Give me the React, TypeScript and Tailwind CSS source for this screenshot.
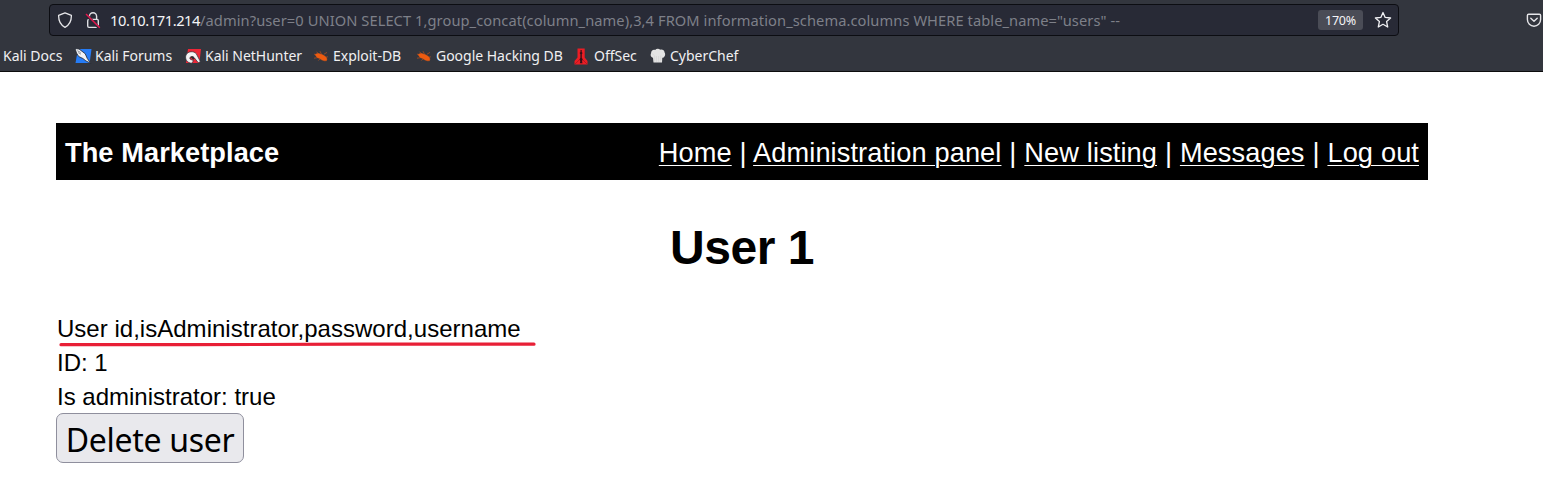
import React from "react";

const chromeFont = "font-['Noto_Sans',sans-serif]";

function Shield() {
  return (
    <svg width="16" height="16" viewBox="0 0 16 16" fill="none" stroke="#e6e6e9" strokeWidth="1.3" strokeLinejoin="round">
      <path d="M8 .8 14.4 3.4C14.5 8.8 12.6 13 8 15.3 3.4 13 1.5 8.8 1.6 3.4Z" />
    </svg>
  );
}

function InsecureLock() {
  return (
    <svg width="16" height="17" viewBox="0 0 16 17" fill="none">
      <path d="M4.4 7V4.3a3.6 3.6 0 0 1 7.2 0V7" stroke="#dedee2" strokeWidth="1.4" />
      <rect x="2.7" y="7.4" width="10.6" height="8" rx="1.3" stroke="#dedee2" strokeWidth="1.4" />
      <path d="M1 2.8 13.9 15.7" stroke="#282a36" strokeWidth="2.8" />
      <path d="M1 2 14.8 15.8" stroke="#e3174c" strokeWidth="1.5" />
    </svg>
  );
}

function Star() {
  return (
    <svg width="18" height="18" viewBox="0 0 18 18" fill="none" stroke="#f0f0f3" strokeWidth="1.3" strokeLinejoin="round">
      <path d="m9 1.5 2.2 4.9 5.4.6-4 3.6 1.1 5.4L9 13.3 4.3 16l1.1-5.4-4-3.6 5.4-.6Z" />
    </svg>
  );
}

function Pocket() {
  return (
    <svg width="16" height="16" viewBox="0 0 16 16" fill="none" stroke="#e6e6e9" strokeWidth="1.4" strokeLinecap="round" strokeLinejoin="round">
      <path d="M2.6 2.2h10.8c.7 0 1.2.5 1.2 1.2v4.2a6.6 6.6 0 0 1-13.2 0V3.4c0-.7.5-1.2 1.2-1.2Z" />
      <path d="M4.8 6.3 8 9.3l3.2-3" />
    </svg>
  );
}

function ForumsIcon() {
  return (
    <svg width="17" height="16" viewBox="0 0 17 16">
      <path d="M3 1h13.5l-1.8 14H.5Z" fill="#267cf5" />
      <path d="M0 .5 4 1l6.2 4.7 2.1 4.8 3.4 4.8-4.8-2.4-3-2.4-4.2-2L1.5 5Z" fill="#f2f3f5" stroke="#20242e" strokeWidth=".8" />
      <path d="m2.3 2.7 3.4 1.8M3.2 4.6l2.8 1.6" stroke="#4b505a" strokeWidth=".6" />
    </svg>
  );
}

function NetHunterIcon() {
  return (
    <svg width="17" height="16" viewBox="0 0 17 16">
      <path d="M3 1h13l-1.6 14H1Z" fill="#ee2637" />
      <path d="M1 7C3 3 8.6 2.8 11.2 5.6l4.2 8-2.1 1.1-4-4.9C7.2 7.3 4.2 8.7 5 11l3.6 1.7-2 2.6C2 14.8-.4 11 1 7Z" fill="#f5f3f4" stroke="#292b34" strokeWidth=".7" />
      <path d="m5.5 9 2.6-.4 1.5 2-1.3 1.2Z" fill="#292b34" />
    </svg>
  );
}

function BugIcon() {
  return (
    <svg width="16" height="16" viewBox="0 0 16 16" fill="none" stroke="#ee5b10">
      <path d="m1 6 3.2 1.5M3.5 3.7l2.5 2.6M7 3.2l2 4M1 10.2l4-.6m.3 3 2-2m3.5.8.7 1.7M11 6.2l3-1.8M12 9.4l2.9-.6" strokeWidth=".5" />
      <path d="M2.2 6.4c1.8-1.3 4-1.2 6.3.1 2.2.3 4.6 2 5.5 4.6l-.6 1.7c-2.4.1-5-.7-6.6-2.2-2.4-.7-4.1-2.4-4.6-4.2Z" fill="#ee5b10" strokeWidth=".4" />
    </svg>
  );
}

function OffSecIcon() {
  return (
    <svg width="14" height="17" viewBox="0 0 14 17">
      <path d="M3.5.5h7.2v9.1l2.8 3.5v3.4H.5v-3.4l3-3.5Z" fill="#ec1d24" />
      <path d="M6.5 2h1.2v2l.9 1-.8 1.3v3.5l1 1.8-.8 1.4.5 2.3H5.8l.5-2.3-.9-1.4 1-1.8V6.3L5.6 5l.9-1Z" fill="#341018" />
      <path d="m1 16 4.2-4M13 16 9 12" stroke="#8d1620" strokeWidth=".6" />
    </svg>
  );
}

function ChefIcon() {
  return (
    <svg width="16" height="16" viewBox="0 0 16 16">
      <path d="M3 9.8C.7 9.4.2 6.7 1.1 5c-.1-2.3 2-3.8 4-3.1C6.5.5 9 .5 10.2 1.8c2-.8 4.3.7 4.4 2.6 1.3 1.9.2 5.1-2.3 5.4l-.3 4.8H3.5Z" fill="#e3e3e3" />
      <path d="M4.3 7.5v6.2M6.4 8v5.9M8.6 8v5.9M10.7 7.5v6.2M1.5 5.5l2.2 1" stroke="#d0d0d0" strokeWidth=".6" />
    </svg>
  );
}

const bookmarks = [
  { label: "Kali Docs", width: "w-[71px]" },
  { label: "Kali Forums", width: "w-[110px]", Icon: ForumsIcon },
  { label: "Kali NetHunter", width: "w-[128px]", Icon: NetHunterIcon },
  { label: "Exploit-DB", width: "w-[103px]", Icon: BugIcon },
  { label: "Google Hacking DB", width: "w-[158px]", Icon: BugIcon },
  { label: "OffSec", width: "w-[76px]", Icon: OffSecIcon },
  { label: "CyberChef", width: "w-[100px]", Icon: ChefIcon },
];

const links = ["Home", "Administration panel", "New listing", "Messages", "Log out"];

export default function App() {
  return (
    <div className="h-[495px] w-[1543px] overflow-hidden bg-white text-black">
      <header className={`h-[72px] border-b border-[#0c0c0d] bg-[#33363e] pt-1 ${chromeFont}`}>
        <div className="flex h-8 items-center pl-[49px]">
          <div className="flex h-8 w-[1350px] shrink-0 items-center rounded-[4px] border border-[#0c0d12] bg-[#282a36] pl-[7px] pr-[6px]">
            <Shield />
            <div className="ml-[12px]"><InsecureLock /></div>
            <div className="ml-[9px] grow whitespace-pre text-[14.67px] leading-none text-[#7e8089]">
              <span className="tracking-[-0.43px] text-[#f4f4f6]">10.10.171.214</span>
              <span className="tracking-[0.074px]">/admin?user=0 UNION SELECT 1,group_concat(column_name),3,4 FROM information_schema.columns WHERE table_name="users" --</span>
            </div>
            <span className="mr-[11px] flex h-5 w-[45px] items-center justify-center rounded-[3px] bg-[#4a4c56] pt-0.5 text-[12.5px] tracking-[-0.2px] text-[#f4f4f6]">170%</span>
            <Star />
          </div>
          <div className="ml-[127px] shrink-0"><Pocket /></div>
        </div>
        <nav className="mt-1 flex h-8 items-center pl-[3px] text-[14px] text-[#f0f0f2]">
          {bookmarks.map(({ label, width, Icon }) => (
            <a key={label} className={`flex h-8 shrink-0 items-center whitespace-nowrap ${width}`}>
              {Icon && <span className="flex w-[21px] shrink-0 pl-px"><Icon /></span>}
              <span className="pb-0.5 tracking-[-0.02px]">{label}</span>
            </a>
          ))}
        </nav>
      </header>

      <main className="ml-14 mt-[51px] w-[1372px] font-['Liberation_Sans',sans-serif]">
        <div className="flex h-[57px] items-center justify-between bg-black px-[9px] pt-[3px] text-[27.2px] text-white">
          <span className="font-bold tracking-[0.08px]">The Marketplace</span>
          <nav className="whitespace-pre tracking-[0.09px] [word-spacing:0.22px]">
            {links.map((label, index) => (
              <React.Fragment key={label}>
                {index > 0 && " | "}
                <a className="underline decoration-1 underline-offset-[3px]">{label}</a>
              </React.Fragment>
            ))}
          </nav>
        </div>
        <h1 className="mt-[38px] h-[60px] text-center text-[48px] font-bold leading-[60px] tracking-[-0.5px]">User 1</h1>
        <div className="mt-[34px] text-[24px] leading-[34px]">
          <div className="relative w-fit pl-px tracking-[0.02px]">
            User id,isAdministrator,password,username
            <svg className="absolute left-[3px] top-[29px]" width="477" height="7" viewBox="0 0 477 7" fill="none">
              <path d="M2 3.7H130L300 3.2H475" stroke="#e81f36" strokeWidth="3.2" strokeLinecap="round" />
            </svg>
          </div>
          <div className="pl-px">ID: 1</div>
          <div className="pl-px">Is administrator: true</div>
        </div>
        <button className={`-mt-px flex h-[50px] w-[188px] items-center justify-center rounded-[7px] border border-[#8f8f9d] bg-[#e9e9ed] pt-[3px] text-[32px] tracking-[-0.3px] ${chromeFont}`}>Delete user</button>
      </main>
    </div>
  );
}
